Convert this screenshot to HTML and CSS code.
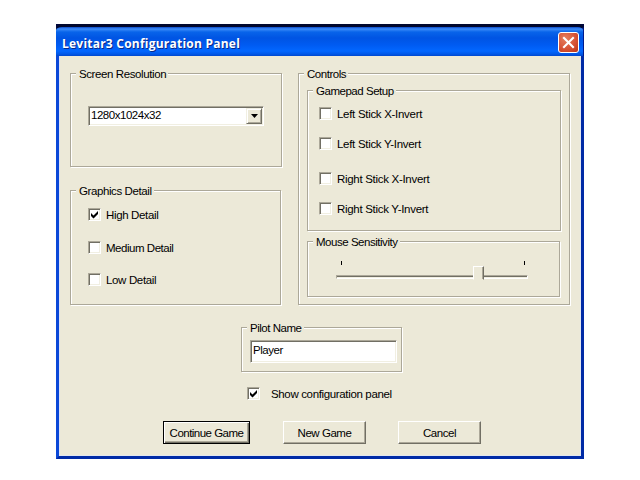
FILE: index.html
```html
<!DOCTYPE html>
<html lang="en">
<head>
<meta charset="utf-8">
<title>Levitar3 Configuration Panel</title>
<link rel="stylesheet" href="styles.css">
</head>
<body>
<main class="window">
  <header class="titlebar">
    <h1>Levitar3 Configuration Panel</h1>
    <button class="close" aria-label="Close"><svg width="13" height="13" viewBox="0 0 13 13"><path d="M2 2L11 11M11 2L2 11" stroke="#fff" stroke-width="2.1" stroke-linecap="square"/></svg></button>
  </header>
  <div class="client">
    <div class="columns">
      <div class="left">
        <section class="group resolution">
          <h2 class="ls-40">Screen Resolution</h2>
          <div class="combo sunken"><span>1280x1024x32</span><i class="drop"><svg width="7" height="4" viewBox="0 0 7 4"><path d="M0 0H7L3.5 4Z"/></svg></i></div>
        </section>
        <section class="group detail">
          <h2 class="ls-40">Graphics Detail</h2>
          <div class="check"><i class="box sunken"><svg width="9" height="9" viewBox="0 0 9 9"><path d="M1 3V6L3.5 8.5L8 4V1L3.5 5.5Z"/></svg></i><span class="ls-38">High Detail</span></div>
          <div class="check"><i class="box sunken"></i><span class="ls-47">Medium Detail</span></div>
          <div class="check"><i class="box sunken"></i><span class="ls-38">Low Detail</span></div>
        </section>
      </div>
      <section class="group controls">
        <h2>Controls</h2>
        <section class="group gamepad">
          <h2>Gamepad Setup</h2>
          <div class="check"><i class="box sunken"></i><span class="ls-30">Left Stick X-Invert</span></div>
          <div class="check"><i class="box sunken"></i><span class="ls-30">Left Stick Y-Invert</span></div>
          <div class="check wide"><i class="box sunken"></i><span class="ls-30">Right Stick X-Invert</span></div>
          <div class="check"><i class="box sunken"></i><span class="ls-30">Right Stick Y-Invert</span></div>
        </section>
        <section class="group mouse">
          <h2>Mouse Sensitivity</h2>
          <div class="ticks"><i></i><i></i></div>
          <div class="track"><i class="thumb"></i></div>
        </section>
      </section>
    </div>
    <section class="group pilot">
      <h2>Pilot Name</h2>
      <div class="field sunken"><span class="ls-47">Player</span></div>
    </section>
    <div class="check show"><i class="box sunken"><svg width="9" height="9" viewBox="0 0 9 9"><path d="M1 3V6L3.5 8.5L8 4V1L3.5 5.5Z"/></svg></i><span class="ls-38">Show configuration panel</span></div>
    <div class="buttons">
      <button class="btn default">Continue Game</button>
      <button class="btn new">New Game</button>
      <button class="btn">Cancel</button>
    </div>
  </div>
</main>
</body>
</html>
```
FILE: styles.css
```css
* { box-sizing: border-box; }
body {
  margin: 0;
  padding: 24px 56px;
  background: #fff;
  font: 11.5px/14px "Liberation Sans", Arial, sans-serif;
  letter-spacing: -0.47px;
  color: #000;
}
h1, h2 { margin: 0; font-size: inherit; font-weight: normal; }
i { display: block; flex: none; }
svg { display: block; }
span { white-space: nowrap; }
.ls-30 { letter-spacing: -0.3px; }
.ls-38 { letter-spacing: -0.35px; }
.ls-40 { letter-spacing: -0.4px; }
.ls-47 { letter-spacing: -0.47px; }

.window {
  width: 528px;
  height: 435px;
  background: #00073c;
}
.titlebar {
  height: 32px;
  padding: 5px 4px 0 6px;
  display: flex;
  justify-content: space-between;
  border-top: 3px solid #00072d;
  border-right: 1px solid #001a8c;
  border-radius: 6px 6px 0 0;
  background: linear-gradient(#0a49c8 0, #3d8cf8 2px, #0864ea 5px, #0054e3 11px, #005bf2 18px, #0267ff 24px, #0058e8 27px, #0048cf 29px);
}
.titlebar h1 {
  font: bold 12px/24px "Open Sans", "Noto Sans", sans-serif;
  letter-spacing: 0.23px;
  color: #fff;
  text-shadow: 1px 1px #0a2a88;
}
.close {
  width: 21px;
  height: 21px;
  padding: 0;
  display: grid;
  place-items: center;
  border: 1px solid #fff;
  border-radius: 3px;
  background: radial-gradient(circle at 35% 30%, #e5805f, #d55033 60%, #b83517);
}
.client {
  height: 403px;
  padding: 17px 0 0 11px;
  background: #ece9d8;
  border: 3px solid #002ba6;
  border-top: 0;
  border-left-color: #0a48d8;
  box-shadow: inset -1px -1px #e2e6ee, inset 1px 0 #dfe3f3;
}

.group {
  border: 1px solid #aca899;
  box-shadow: 1px 1px #fff, inset 1px 1px #fff;
}
.group > h2 {
  width: fit-content;
  margin: -7px 0 0 5px;
  padding: 0 2px 0 3px;
  background: #ece9d8;
}
.columns { display: flex; gap: 16px; }
.left { width: 212px; }
.resolution { height: 94px; }
.detail { width: 211px; height: 115px; margin-top: 23px; }
.controls { width: 272px; height: 232px; }
.gamepad { width: 254px; height: 141px; margin: 9px 0 0 8px; }
.mouse { width: 253px; height: 56px; margin: 10px 0 0 8px; }

.sunken {
  background: #fff;
  border: 1px solid;
  border-color: #aca899 #fff #fff #aca899;
  box-shadow: inset 1px 1px #716f64, inset -1px -1px #f1efe2;
}
.combo {
  width: 176px;
  height: 20px;
  margin: 25px 0 0 17px;
  padding: 1px 1px 1px 2px;
  display: flex;
  justify-content: space-between;
}
.drop {
  width: 16px;
  height: 16px;
  display: grid;
  place-items: center;
  background: #ece9d8;
  border: 1px solid;
  border-color: #f1efe2 #716f64 #716f64 #f1efe2;
  box-shadow: inset 1px 1px #fff, inset -1px -1px #aca899;
}
.check { display: flex; height: 14px; }
.box { width: 13px; height: 13px; padding: 1px; margin-right: 5px; }
.detail .check { margin: 19px 0 0 17px; }
.detail h2 + .check { margin-top: 10px; }
.detail .check:last-child { margin-top: 18px; }
.gamepad .check { margin: 16px 0 0 11px; }
.gamepad h2 + .check { margin-top: 9px; }
.gamepad .wide { margin-top: 21px; }

.ticks {
  width: 184px;
  margin: 12px 0 0 33px;
  display: flex;
  justify-content: space-between;
}
.ticks i { width: 1px; height: 4px; background: #000; }
.track {
  width: 192px;
  height: 4px;
  margin: 10px 0 0 28px;
  padding-left: 136px;
  border: 1px solid;
  border-color: #aca899 #fff #fff #aca899;
  background: linear-gradient(#716f64 1px, #f1efe2 1px);
}
.thumb {
  width: 11px;
  height: 14px;
  margin-top: -10px;
  background: #ece9d8;
  border: 1px solid;
  border-color: #fff #716f64 #ece9d8 #fff;
  box-shadow: inset -1px 0 #aca899;
}

.pilot { width: 161px; height: 45px; margin: 22px 0 0 171px; }
.field {
  width: 147px;
  height: 23px;
  margin: 5px 0 0 8px;
  padding: 2px 2px;
}
.show { margin: 15px 0 0 177px; }
.show .box { margin-right: 11px; }
.buttons { display: flex; margin: 20px 0 0 93px; }
.btn {
  width: 83px;
  height: 23px;
  padding: 0;
  font-family: inherit;
  font-size: inherit;
  letter-spacing: -0.45px;
  color: #000;
  background: #ece9d8;
  border: 1px solid;
  border-color: #fff #716f64 #716f64 #fff;
  box-shadow: inset -1px -1px #aca899;
}
.btn.new { margin: 0 32px 0 33px; }
.btn.default {
  width: 87px;
  letter-spacing: -0.52px;
  border-color: #000;
  box-shadow: inset 1px 1px #fff, inset -1px -1px #716f64, inset -2px -2px #aca899;
}
```
